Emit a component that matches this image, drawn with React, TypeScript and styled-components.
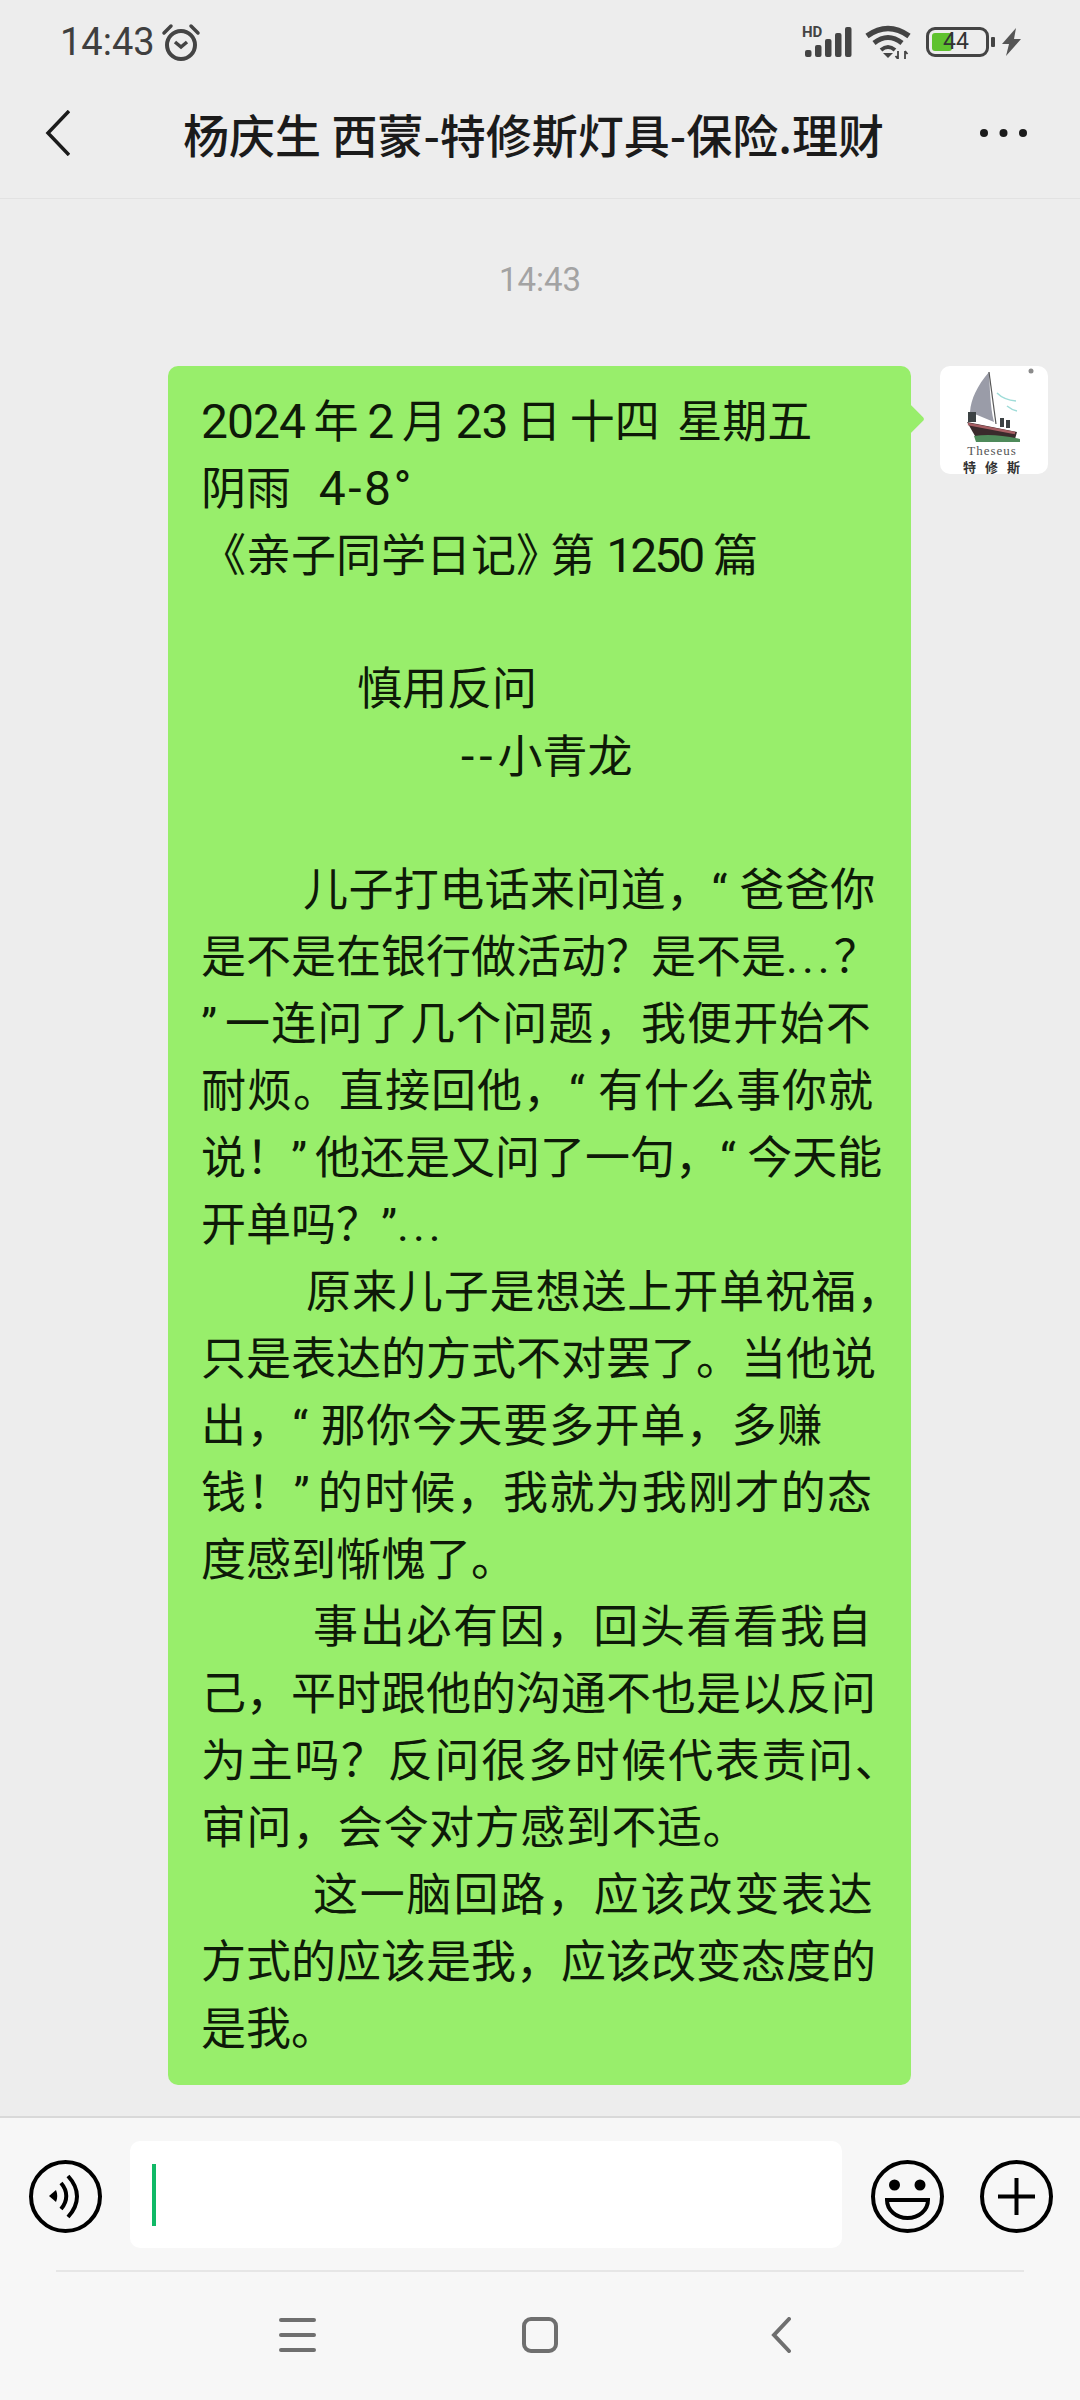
import React from "react";
import styled, { createGlobalStyle } from "styled-components";

const GlobalStyle = createGlobalStyle`
  html, body {
    margin: 0;
    padding: 0;
    background: #ededed;
  }
  * {
    box-sizing: border-box;
  }
`;

const FONT = `Roboto, "Noto Sans CJK SC", sans-serif`;

const Phone = styled.div`
  width: 1080px;
  height: 2400px;
  display: flex;
  flex-direction: column;
  background: #ededed;
  font-family: ${FONT};
  overflow: hidden;
`;

const StatusBar = styled.div`
  height: 84px;
  padding: 0 59px 0 60px;
  display: flex;
  align-items: center;
  justify-content: space-between;
  color: #3f3f3f;
`;

const StatusGroup = styled.div`
  display: flex;
  align-items: center;
`;

const Clock = styled.span`
  font-size: 38px;
  line-height: 40px;
`;

const NavBar = styled.div`
  height: 115px;
  padding: 0 53px 16px 45px;
  display: flex;
  align-items: center;
  border-bottom: 1px solid #e2e2e2;
`;

const Title = styled.div`
  flex: 1;
  text-align: center;
  font-family: "Noto Sans CJK SC", sans-serif;
  font-size: 46px;
  font-weight: 500;
  color: #1b1b1b;
  white-space: nowrap;
  padding-left: 17px;
`;

const Feed = styled.div`
  flex: 1;
  padding-top: 61px;
  display: flex;
  flex-direction: column;
  border-bottom: 2px solid #d9d9d9;
`;

const TimeStamp = styled.div`
  text-align: center;
  font-size: 33px;
  line-height: 40px;
  color: #a3a3a3;
  margin-bottom: 66px;
`;

const Row = styled.div`
  display: flex;
  justify-content: flex-end;
  align-items: flex-start;
  padding-right: 32px;
  gap: 29px;
`;

const Bubble = styled.div`
  position: relative;
  width: 743px;
  height: 1719px;
  padding: 22px 0 0 33px;
  background: #98ee6b;
  border-radius: 10px;
  &::after {
    content: "";
    position: absolute;
    top: 41px;
    right: -9px;
    width: 24px;
    height: 24px;
    background: #98ee6b;
    transform: rotate(45deg);
    border-radius: 3px;
  }
`;

const Line = styled.div<{ $indent?: number; $spread?: number; $word?: number }>`
  height: 67px;
  font-size: 45px;
  line-height: 67px;
  color: #0e1a08;
  white-space: pre;
  padding-left: ${(p) => p.$indent ?? 0}px;
  letter-spacing: ${(p) => p.$spread ?? 0}px;
  word-spacing: ${(p) => p.$word ?? 0}px;
`;

const Num = styled.span`
  font-size: 48px;
  letter-spacing: -1px;
`;

const Narrow = styled(Num)`
  letter-spacing: -3px;
`;

const Wide = styled(Num)`
  letter-spacing: 2.500px;
`;

const Dash = styled(Num)`
  letter-spacing: 5px;
`;

const Dots = styled.span`
  letter-spacing: 4px;
`;

const Quote = styled.span`
  letter-spacing: 8px;
`;

const Bracket = styled.span`
  letter-spacing: -11px;
`;

const Avatar = styled.div`
  width: 108px;
  height: 108px;
  border-radius: 10px;
  background: #fff;
  display: flex;
  flex-direction: column;
  align-items: center;
`;

const Brand = styled.div`
  font-family: "Liberation Serif", serif;
  font-size: 13px;
  line-height: 13px;
  margin: 2px 4px 0 0;
  color: #555;
  letter-spacing: 1px;
`;

const BrandCn = styled.div`
  font-family: "Noto Sans CJK SC", sans-serif;
  font-size: 13px;
  line-height: 15px;
  font-weight: 700;
  color: #333;
  letter-spacing: 9px;
  margin: 2px -4px 0 0;
`;

const InputBar = styled.div`
  height: 152px;
  padding: 23px 0 0 29px;
  background: #f7f7f7;
  display: flex;
  align-items: flex-start;
`;

const RoundIcon = styled.svg`
  width: 73px;
  height: 73px;
  margin-top: 19px;
  flex-shrink: 0;
`;

const Field = styled.div`
  width: 712px;
  height: 107px;
  margin: 0 29px 0 28px;
  padding: 23px 0 0 22px;
  background: #fff;
  border-radius: 10px;
`;

const Caret = styled.div`
  width: 4px;
  height: 62px;
  background: #10b966;
`;

const IconGap = styled.div`
  width: 36px;
  flex-shrink: 0;
`;

const BottomArea = styled.div`
  height: 130px;
  background: #f7f7f7;
  padding: 0 0 0 56px;
`;

const Rule = styled.div`
  width: 968px;
  height: 2px;
  background: #e6e6e6;
`;

const NavKeys = styled.div`
  display: flex;
  align-items: center;
  height: 126px;
  padding: 0 0 0 223px;
`;

const Key = styled.svg<{ $w: number; $gap: number }>`
  width: ${(p) => p.$w}px;
  height: 36px;
  margin-right: ${(p) => p.$gap}px;
  flex-shrink: 0;
`;

const BatteryWrap = styled.div`
  display: flex;
  align-items: center;
  margin-left: 15px;
`;

const BatteryBody = styled.div`
  position: relative;
  width: 63px;
  height: 30px;
  border: 3px solid #444;
  border-radius: 9px;
`;

const BatteryFill = styled.div`
  position: absolute;
  left: 3px;
  top: 3px;
  bottom: 3px;
  width: 20px;
  background: #5fc22f;
  border-radius: 3px;
`;

const BatteryLabel = styled.span`
  position: absolute;
  left: 14px;
  top: -1px;
  font-size: 23px;
  line-height: 26px;
  color: #333;
`;

const BatteryCap = styled.div`
  width: 4px;
  height: 10px;
  margin-left: 2px;
  background: #444;
  border-radius: 1px;
`;

type LineData = { node: React.ReactNode; indent?: number; spread?: number; word?: number };

const lines: LineData[] = [
  {
    node: (
      <>
        <Num>2024</Num> 年 <Num>2</Num> 月 <Num>23</Num> 日 十四{"  "}星期五
      </>
    ),
    word: -2.5,
  },
  {
    node: (
      <>
        阴雨<Num>{"  "}</Num>
        <Wide>4-8°</Wide>
      </>
    ),
    word: 3,
  },
  {
    node: (
      <>
        《亲子同学日记<Bracket>》</Bracket>第 <Narrow>1250</Narrow> 篇
      </>
    ),
  },
  { node: " " },
  { node: "慎用反问", indent: 156 },
  {
    node: (
      <>
        <Dash>--</Dash>小青龙
      </>
    ),
    indent: 260,
  },
  { node: " " },
  { node: "儿子打电话来问道，“ 爸爸你", indent: 102, spread: 0.4 },
  {
    node: (
      <>
        是不是在银行做活动？是不是<Dots>...</Dots>？
      </>
    ),
  },
  {
    node: (
      <>
        <Quote>”</Quote>一连问了几个问题，我便开始不
      </>
    ),
    spread: 1.2,
  },
  { node: "耐烦。直接回他，“ 有什么事你就", spread: 1 },
  {
    node: (
      <>
        说！<Quote>”</Quote>他还是又问了一句，“ 今天能
      </>
    ),
  },
  {
    node: (
      <>
        开单吗？”<Dots>...</Dots>
      </>
    ),
  },
  { node: "原来儿子是想送上开单祝福，", indent: 105, spread: 0.9 },
  { node: "只是表达的方式不对罢了。当他说" },
  { node: "出，“ 那你今天要多开单，多赚", spread: 0.65 },
  {
    node: (
      <>
        钱！<Quote>”</Quote>的时候，我就为我刚才的态
      </>
    ),
    spread: 1.3,
  },
  { node: "度感到惭愧了。" },
  { node: "事出必有因，回头看看我自", indent: 112, spread: 1.7 },
  { node: "己，平时跟他的沟通不也是以反问" },
  { node: "为主吗？反问很多时候代表责问、", spread: 1.7 },
  { node: "审问，会令对方感到不适。", spread: 0.6 },
  { node: "这一脑回路，应该改变表达", indent: 112, spread: 1.8 },
  { node: "方式的应该是我，应该改变态度的" },
  { node: "是我。" },
];

function Battery() {
  return (
    <BatteryWrap>
      <BatteryBody>
        <BatteryFill />
        <BatteryLabel>44</BatteryLabel>
      </BatteryBody>
      <BatteryCap />
      <svg width="19" height="28" viewBox="0 0 19 28" fill="#555" style={{ marginLeft: 7 }}>
        <path d="M14 0L0 16h7L4 28l15-17h-7z" />
      </svg>
    </BatteryWrap>
  );
}

export default function App() {
  return (
    <Phone>
      <GlobalStyle />
      <StatusBar>
        <StatusGroup>
          <Clock>14:43</Clock>
          <svg width="40" height="38" viewBox="0 0 40 38" style={{ marginLeft: 6 }} fill="none" stroke="#444">
            <circle cx="20" cy="22" r="14" strokeWidth="4" />
            <path d="M14 19l6 5 6-5" strokeWidth="3.500" />
            <path d="M3 10l7-7M37 10l-7-7" strokeWidth="3.500" strokeLinecap="round" />
          </svg>
        </StatusGroup>
        <StatusGroup>
          <svg width="50" height="40" viewBox="0 -4 50 40" fill="#444">
            <rect x="3" y="24" width="6.500" height="7" rx="2" />
            <rect x="13" y="19" width="6.500" height="12" rx="2" />
            <rect x="23" y="13" width="6.500" height="18" rx="2" />
            <rect x="33" y="7" width="6.500" height="24" rx="2" />
            <rect x="43" y="1" width="6.500" height="30" rx="2" />
            <text x="0" y="11" fontFamily="Roboto, sans-serif" fontWeight="700" fontSize="15">
              HD
            </text>
          </svg>
          <svg width="46" height="34" viewBox="0 0 46 34" style={{ marginLeft: 13 }} fill="none" stroke="#444">
            <path d="M2 11Q23-4 44 11" strokeWidth="5.500" />
            <path d="M9 18Q23 7 37 18" strokeWidth="5" />
            <path d="M16 25Q23 19 30 25" strokeWidth="4" />
            <path d="M18 28h10l-5 5z" fill="#444" stroke="none" />
            <path d="M33 26v8M30.500 31l2.500 3M40 26v8M42.500 29l-2.500-3" strokeWidth="1.800" />
          </svg>
          <Battery />
        </StatusGroup>
      </StatusBar>

      <NavBar>
        <svg width="25" height="46" viewBox="0 0 25 46" fill="none" stroke="#1b1b1b" strokeWidth="3.500">
          <path d="M24 1L3 23l21 22" />
        </svg>
        <Title>杨庆生 西蒙-特修斯灯具-保险.理财</Title>
        <svg width="47" height="10" viewBox="0 0 47 10" fill="#1b1b1b">
          <circle cx="4" cy="5" r="4" />
          <circle cx="23.500" cy="5" r="4" />
          <circle cx="43" cy="5" r="4" />
        </svg>
      </NavBar>

      <Feed>
        <TimeStamp>14:43</TimeStamp>
        <Row>
          <Bubble>
            {lines.map((l, i) => (
              <Line key={i} $indent={l.indent} $spread={l.spread} $word={l.word}>
                {l.node}
              </Line>
            ))}
          </Bubble>
          <Avatar>
            <svg width="108" height="76" viewBox="0 0 108 76">
              <circle cx="91" cy="5" r="2.500" fill="#8b8b8b" />
              <path d="M49 6C37 20 31 33 30 46l24 10C50 40 50 22 49 6z" fill="#9a9ca8" />
              <path d="M49 6l7 52" stroke="#555" strokeWidth="1.200" fill="none" />
              <path d="M57 27q7 7 19 8M67 40q5 4 10 5" stroke="#9fdcd8" strokeWidth="1.500" fill="none" />
              <path d="M28 46h8v10h-8zM60 52h4v9h-4zM66 54h4v8h-4z" fill="#3c4244" />
              <path d="M27 56l50 10-2 7-40-3z" fill="#3a2a2c" />
              <path d="M28 58l47 9" stroke="#a65e63" strokeWidth="2.500" fill="none" />
              <path d="M34 70q20-3 46 3v3H36z" fill="#4e8a5a" />
            </svg>
            <Brand>Theseus</Brand>
            <BrandCn>特修斯</BrandCn>
          </Avatar>
        </Row>
      </Feed>

      <InputBar>
        <RoundIcon viewBox="0 0 73 73" fill="none" stroke="#000" strokeWidth="4">
          <circle cx="36.500" cy="36.500" r="34.500" />
          <path d="M20 36l7-6q2.500 6 0 12z" fill="#000" stroke="none" />
          <path d="M32 23c7 8 7 18 0 26" />
          <path d="M39 16c12 13 12 28 0 41" />
        </RoundIcon>
        <Field>
          <Caret />
        </Field>
        <RoundIcon viewBox="0 0 73 73" fill="none" stroke="#000" strokeWidth="4">
          <circle cx="36.500" cy="36.500" r="34.500" />
          <circle cx="23.500" cy="25" r="5.500" fill="#000" stroke="none" />
          <circle cx="49" cy="25" r="5.500" fill="#000" stroke="none" />
          <path d="M16 40h41c0 10-9 18-20.500 18S16 50 16 40z" />
        </RoundIcon>
        <IconGap />
        <RoundIcon viewBox="0 0 73 73" fill="none" stroke="#000" strokeWidth="4">
          <circle cx="36.500" cy="36.500" r="34.500" />
          <path d="M18 36.500h37M36.500 18v37" />
        </RoundIcon>
      </InputBar>

      <BottomArea>
        <Rule />
        <NavKeys>
          <Key $w={37} $gap={206} viewBox="0 0 37 36" fill="none" stroke="#6f6f6f" strokeWidth="4" strokeLinecap="round">
            <path d="M2 3h33M2 18h33M2 33h33" />
          </Key>
          <Key $w={36} $gap={213} viewBox="0 0 36 36" fill="none" stroke="#6f6f6f" strokeWidth="4">
            <rect x="2" y="2" width="32" height="32" rx="7" />
          </Key>
          <Key $w={20} $gap={0} viewBox="0 0 20 36" fill="none" stroke="#6f6f6f" strokeWidth="4" strokeLinecap="round">
            <path d="M18 2L3 18l15 16" />
          </Key>
        </NavKeys>
      </BottomArea>
    </Phone>
  );
}
